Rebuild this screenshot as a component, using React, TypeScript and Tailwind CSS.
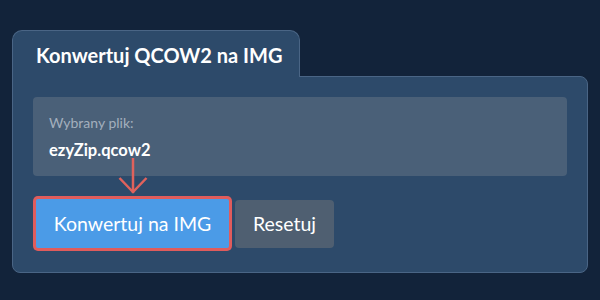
export default function App() {
  return (
    <div
      className="w-[600px] h-[300px] bg-[#12233a] px-3 pt-[30px] flex flex-col"
      style={{ fontFamily: "Lato, 'Noto Sans', sans-serif" }}
    >
      {/* Tab */}
      <div className="relative z-10 -mb-px w-[288px] h-[47px] bg-[#2d4a6a] border border-b-0 border-[#4a6585] rounded-t-[10px] pl-[23px] pt-[14px]">
        <h1 className="text-[20px] font-bold text-white leading-none">Konwertuj QCOW2 na IMG</h1>
      </div>

      {/* Panel */}
      <div className="relative w-[576px] h-[197px] bg-[#2d4a6a] border border-[#4a6585] rounded-b-[8px] rounded-tr-[8px] px-5 pt-5">
        <div className="h-[79px] bg-[#4a6078] rounded-[4px] px-4 pt-[19px]">
          <div className="text-[14px] leading-none text-[#a3afbd]">Wybrany plik:</div>
          <div className="mt-[12px] text-[16.5px] leading-none font-bold text-white">ezyZip.qcow2</div>
        </div>

        <div className="mt-[23px] flex items-center gap-[6px] pl-[3px]">
          <button className="w-[193px] h-[49px] bg-[#4b9be7] rounded-[2px] ring-[3px] ring-[#e05c5c] text-white text-[19.5px]">
            Konwertuj na IMG
          </button>
          <button className="w-[99px] h-[48px] bg-[#4f5f71] rounded-[4px] text-white text-[19.5px]">
            Resetuj
          </button>
        </div>

        {/* Arrow pointing at the convert button */}
        <svg className="absolute left-[105px] top-[80px]" width="30" height="40" viewBox="0 0 30 40">
          <path d="M15 1 V36" stroke="#e0625c" strokeWidth="2.5" fill="none" />
          <path d="M1.5 21 L15 35 L28.5 21" stroke="#e0625c" strokeWidth="2.5" fill="none" />
        </svg>
      </div>
    </div>
  )
}
